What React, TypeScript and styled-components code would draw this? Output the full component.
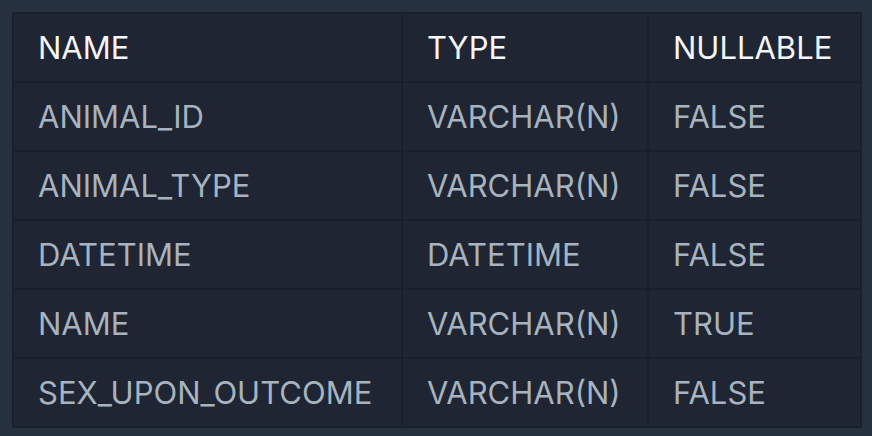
import React from "react";
import styled, { createGlobalStyle } from "styled-components";

const Global = createGlobalStyle`
  html, body { margin: 0; padding: 0; background: #263140; }
  body { font-family: Inter, "Noto Sans", sans-serif; }
`;

const Page = styled.div`
  width: 872px;
  height: 436px;
  box-sizing: border-box;
  padding: 12px;
  background: #263140;
`;

const Table = styled.table`
  width: 848px;
  border-collapse: collapse;
  background: #1f2532;
  border: 1px solid #1a202a;
  table-layout: fixed;
`;

const Col = styled.col<{ $w: number }>`
  width: ${(p) => p.$w}px;
`;

const Row = styled.tr`
  height: 69px;
`;

const HeadCell = styled.th`
  text-align: left;
  font-weight: 400;
  font-size: 31px;
  color: #f4f6f9;
  padding: 0 0 0 24px;
  border: 2px solid #1a202a;
  white-space: nowrap;
`;

const Cell = styled.td`
  font-size: 31px;
  color: #a7b3bf;
  padding: 0 0 0 24px;
  border: 2px solid #1a202a;
  white-space: nowrap;
`;

const rows = [
  ["ANIMAL_ID", "VARCHAR(N)", "FALSE"],
  ["ANIMAL_TYPE", "VARCHAR(N)", "FALSE"],
  ["DATETIME", "DATETIME", "FALSE"],
  ["NAME", "VARCHAR(N)", "TRUE"],
  ["SEX_UPON_OUTCOME", "VARCHAR(N)", "FALSE"],
];

export default function App() {
  return (
    <Page>
      <Global />
      <Table>
        <colgroup>
          <Col $w={389} />
          <Col $w={246} />
          <Col $w={213} />
        </colgroup>
        <thead>
          <Row>
            <HeadCell>NAME</HeadCell>
            <HeadCell>TYPE</HeadCell>
            <HeadCell>NULLABLE</HeadCell>
          </Row>
        </thead>
        <tbody>
          {rows.map((r) => (
            <Row key={r[0]}>
              {r.map((c, i) => (
                <Cell key={i}>{c}</Cell>
              ))}
            </Row>
          ))}
        </tbody>
      </Table>
    </Page>
  );
}
